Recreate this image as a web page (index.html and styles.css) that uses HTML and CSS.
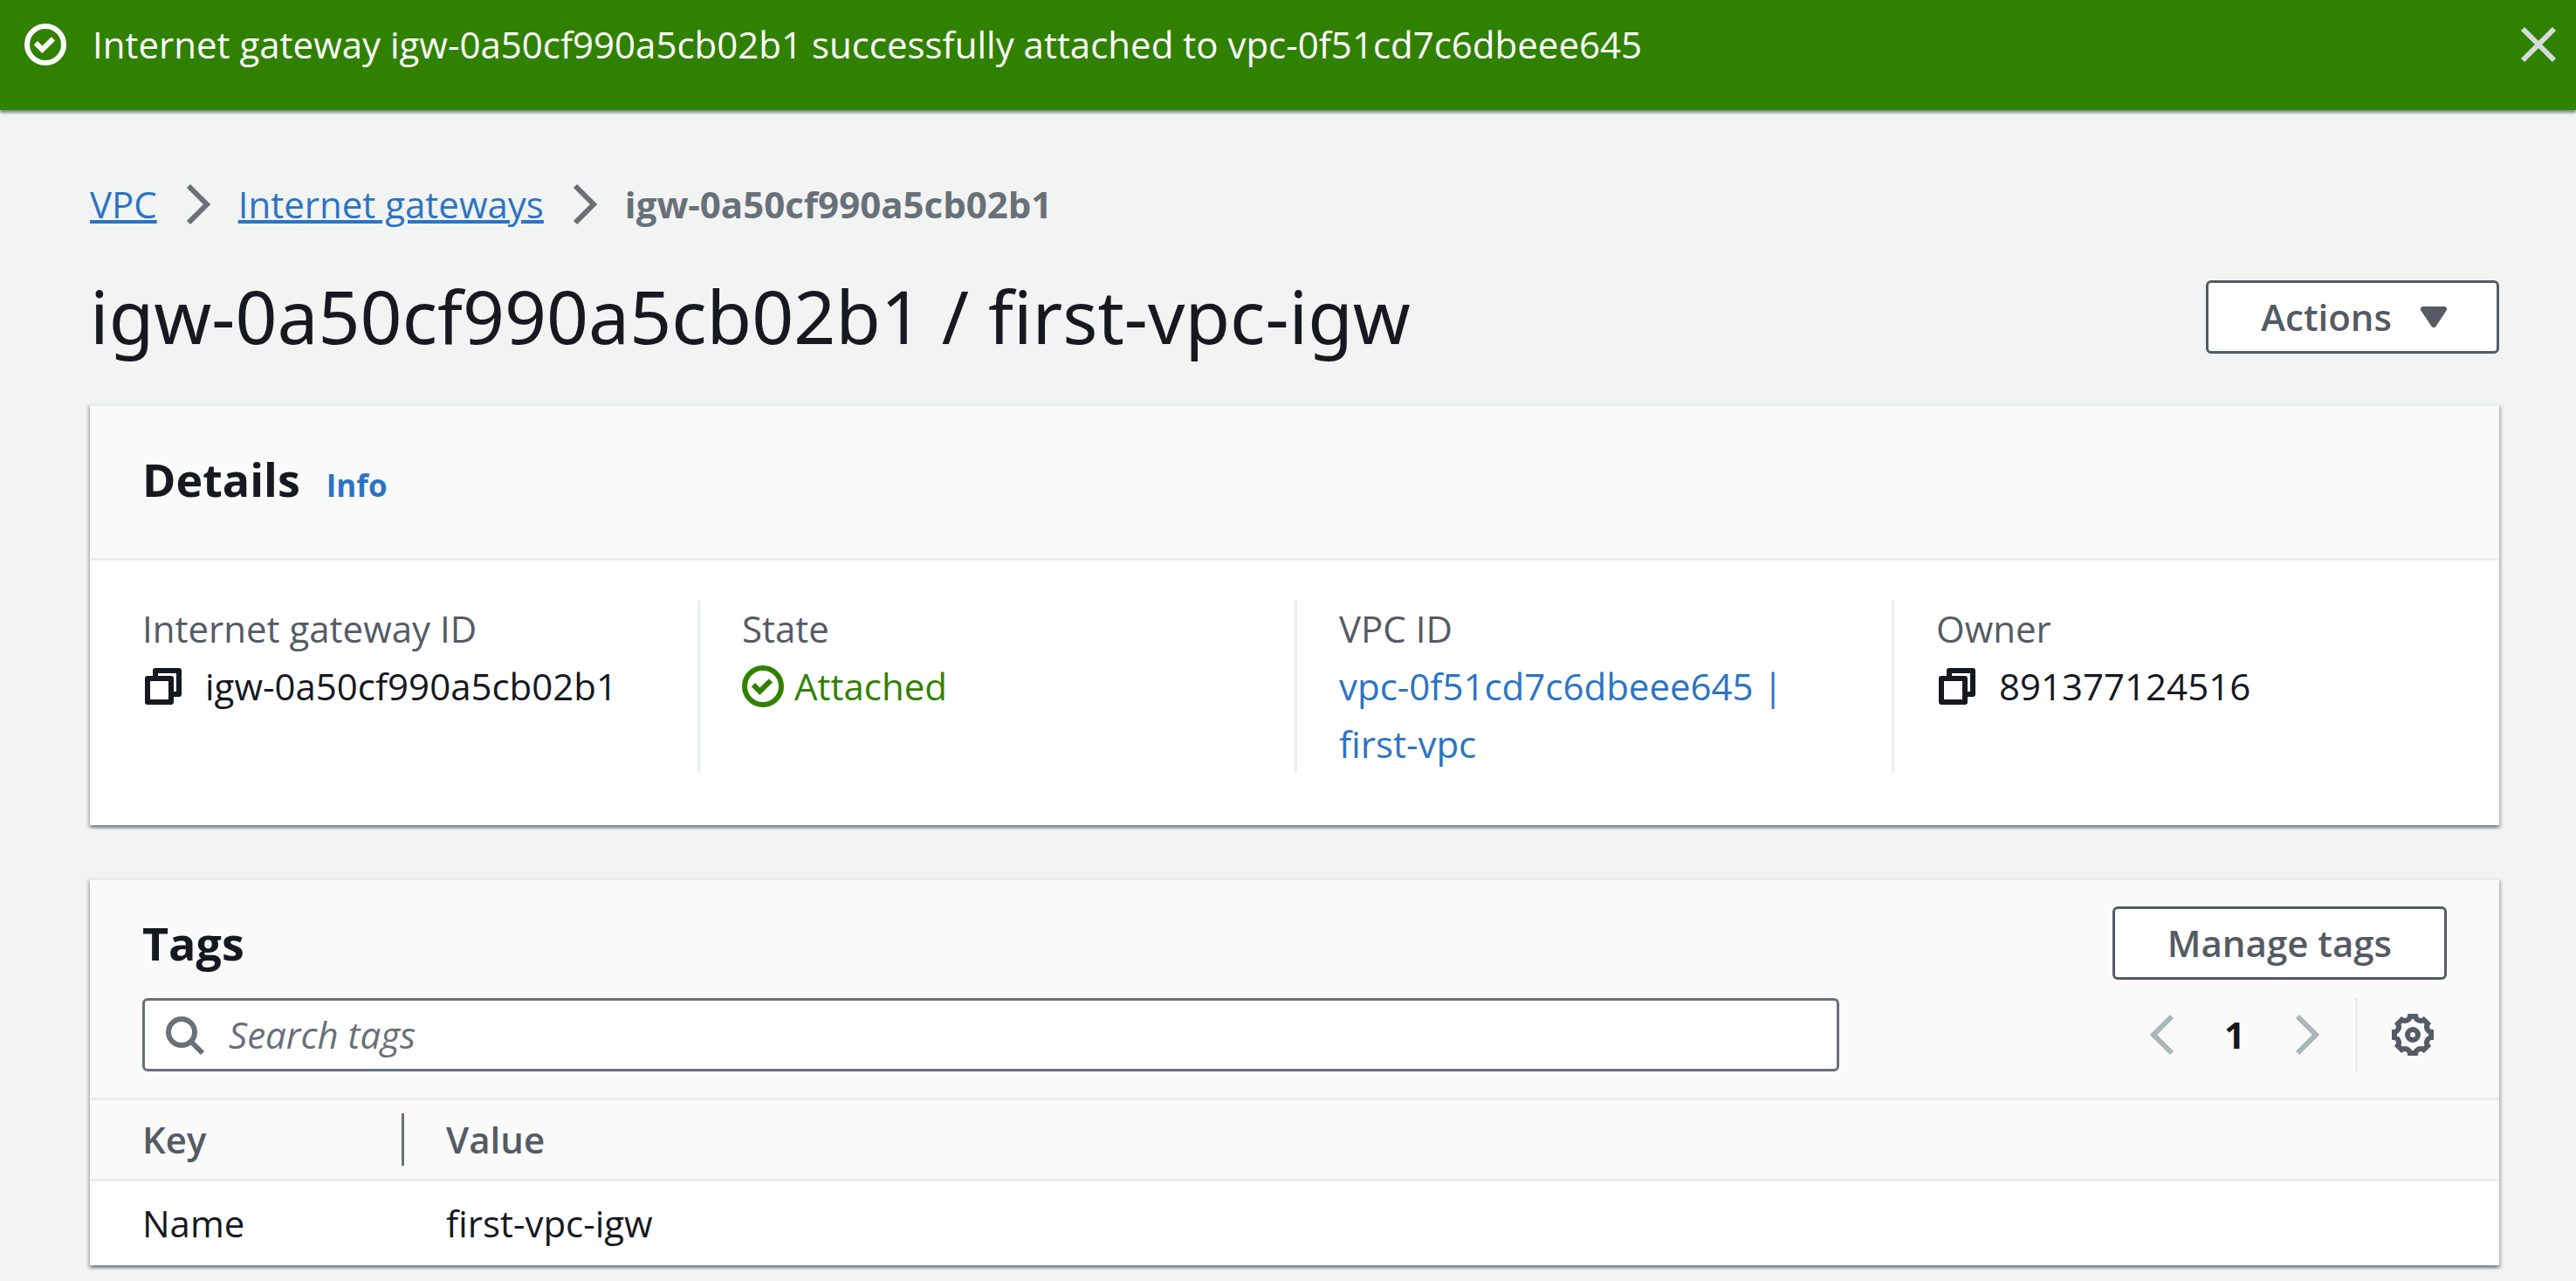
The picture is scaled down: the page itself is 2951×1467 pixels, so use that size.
FILE: index.html
```html
<!DOCTYPE html>
<html lang="en">
<head>
<meta charset="utf-8">
<meta name="viewport" content="width=device-width, initial-scale=1">
<title>igw-0a50cf990a5cb02b1 | VPC</title>
<link rel="stylesheet" href="styles.css">
</head>
<body>
<div class="flash" role="status">
  <svg class="icon" viewBox="0 0 16 16" aria-hidden="true"><circle cx="8" cy="8" r="7"/><path d="M4.3 7.4l2.5 2.5L11 5.8"/></svg>
  <p class="flash-text">Internet gateway igw-0a50cf990a5cb02b1 successfully attached to vpc-0f51cd7c6dbeee645</p>
  <button class="icon-button flash-close" type="button" aria-label="Dismiss">
    <svg class="icon" viewBox="0 0 16 16" aria-hidden="true"><path d="M2 2l12 12M14 2L2 14"/></svg>
  </button>
</div>

<main class="page">
  <nav aria-label="Breadcrumbs">
    <ol class="breadcrumbs">
      <li><a href="#vpc">VPC</a></li>
      <li><svg class="icon" viewBox="0 0 16 16" aria-hidden="true"><path d="M5 1l7 7-7 7"/></svg><a href="#internet-gateways">Internet gateways</a></li>
      <li><svg class="icon" viewBox="0 0 16 16" aria-hidden="true"><path d="M5 1l7 7-7 7"/></svg><span class="current" aria-current="page">igw-0a50cf990a5cb02b1</span></li>
    </ol>
  </nav>

  <header class="page-header">
    <h1>igw-0a50cf990a5cb02b1 / first-vpc-igw</h1>
    <div class="page-actions">
      <button class="button button-menu" type="button" aria-haspopup="true">Actions
        <svg class="icon icon-caret" viewBox="0 0 16 16" aria-hidden="true"><path d="M4 5h8l-4 6z"/></svg>
      </button>
    </div>
  </header>

  <section class="card" aria-labelledby="details-title">
    <header class="card-header">
      <h2 id="details-title">Details</h2>
      <a class="info" href="#info">Info</a>
    </header>
    <dl class="details">
      <div class="detail">
        <dt>Internet gateway ID</dt>
        <dd class="copyable">
          <button class="icon-button" type="button" aria-label="Copy internet gateway ID"><svg class="icon icon-copy" viewBox="0 0 16 16" aria-hidden="true"><path d="M5 5V2h9v9h-3"/><path d="M2 5h9v9H2z"/></svg></button>
          <span>igw-0a50cf990a5cb02b1</span>
        </dd>
      </div>
      <div class="detail">
        <dt>State</dt>
        <dd class="status">
          <svg class="icon" viewBox="0 0 16 16" aria-hidden="true"><circle cx="8" cy="8" r="7"/><path d="M4.3 7.4l2.5 2.5L11 5.8"/></svg>
          <span>Attached</span>
        </dd>
      </div>
      <div class="detail">
        <dt>VPC ID</dt>
        <dd><a href="#vpc-0f51cd7c6dbeee645">vpc-0f51cd7c6dbeee645 | first-vpc</a></dd>
      </div>
      <div class="detail">
        <dt>Owner</dt>
        <dd class="copyable">
          <button class="icon-button" type="button" aria-label="Copy owner"><svg class="icon icon-copy" viewBox="0 0 16 16" aria-hidden="true"><path d="M5 5V2h9v9h-3"/><path d="M2 5h9v9H2z"/></svg></button>
          <span>891377124516</span>
        </dd>
      </div>
    </dl>
  </section>

  <section class="card" aria-labelledby="tags-title">
    <header class="tags-header">
      <div class="tags-title">
        <h2 id="tags-title">Tags</h2>
        <button class="button" type="button">Manage tags</button>
      </div>
      <div class="tags-tools">
        <label class="search">
          <svg class="icon" viewBox="0 0 16 16" aria-hidden="true"><circle cx="7" cy="7" r="5"/><path d="M10.5 10.5L15 15"/></svg>
          <input type="search" placeholder="Search tags" aria-label="Search tags">
        </label>
        <div class="tools-end">
          <div class="pagination">
            <button class="icon-button" type="button" aria-label="Previous page" disabled><svg class="icon" viewBox="0 0 16 16" aria-hidden="true"><path d="M11 1L4 8l7 7"/></svg></button>
            <button class="page-number" type="button" aria-current="true">1</button>
            <button class="icon-button" type="button" aria-label="Next page" disabled><svg class="icon" viewBox="0 0 16 16" aria-hidden="true"><path d="M5 1l7 7-7 7"/></svg></button>
          </div>
          <div class="preferences">
            <button class="icon-button" type="button" aria-label="Preferences"><svg class="icon" viewBox="0 0 16 16" aria-hidden="true"><circle cx="8" cy="8" r="2"/><path d="M6.95 1H9.05A2 2 0 0 0 12.2 2.3L13.7 3.8A2 2 0 0 0 15 6.95V9.05A2 2 0 0 0 13.7 12.2L12.2 13.7A2 2 0 0 0 9.05 15H6.95A2 2 0 0 0 3.8 13.7L2.3 12.2A2 2 0 0 0 1 9.05V6.95A2 2 0 0 0 2.3 3.8L3.8 2.3A2 2 0 0 0 6.95 1Z"/></svg></button>
          </div>
        </div>
      </div>
    </header>
    <table class="tags">
      <thead>
        <tr><th class="key" scope="col"><span class="divided">Key</span></th><th scope="col">Value</th></tr>
      </thead>
      <tbody>
        <tr><td>Name</td><td>first-vpc-igw</td></tr>
      </tbody>
    </table>
  </section>
</main>
</body>
</html>
```
FILE: styles.css
```css
:root {
  --text: #16191f;
  --secondary: #545b64;
  --muted: #687078;
  --link: #2b74c4;
  --success: #318100;
  --line: #eaeded;
  --shadow: 0 3px 3px rgba(0, 28, 36, .3), 3px 3px 3px rgba(0, 28, 36, .15), -3px 3px 3px rgba(0, 28, 36, .15);
}

* { box-sizing: border-box; }

body {
  margin: 0;
  background: #f2f3f3;
  color: var(--text);
  font: 42px/66px "Open Sans", "Noto Sans", sans-serif;
}

h1, h2, p, ol, dl, dd { margin: 0; padding: 0; font-weight: 400; }
button, input { font: inherit; }
a { color: var(--link); text-decoration: none; }

.icon {
  display: block;
  flex: none;
  width: 48px;
  height: 48px;
  fill: none;
  stroke: currentColor;
  stroke-width: 2;
}
.icon-caret { fill: currentColor; stroke-linejoin: round; }
.icon-copy { stroke-linejoin: round; }

.icon-button {
  flex: none;
  padding: 0;
  border: 0;
  background: none;
  color: inherit;
}

.button {
  display: flex;
  align-items: center;
  height: 84px;
  padding: 0 60px;
  border: 3px solid var(--secondary);
  border-radius: 6px;
  background: #fff;
  color: var(--secondary);
  font-weight: 600;
}
.button-menu { gap: 24px; padding-right: 48px; }

.flash {
  display: flex;
  align-items: center;
  gap: 30px;
  padding: 18px 19px 42px 28px;
  background: var(--success);
  color: #fff;
  box-shadow: 0 3px 3px rgba(0, 28, 36, .5);
}
.flash-text { flex: 1; }
.flash-close { color: #d5dbdb; }

.page { padding: 75px 88px 18px 103px; }

.breadcrumbs { display: flex; list-style: none; }
.breadcrumbs li { display: flex; align-items: center; }
.breadcrumbs a { text-decoration: underline; text-decoration-thickness: 4px; }
.breadcrumbs .icon { margin: 0 24px 0 21px; color: var(--muted); }
.current { color: var(--muted); font-weight: 700; }

.page-header {
  display: flex;
  justify-content: space-between;
  align-items: flex-start;
  padding: 42px 0 48px;
}
h1 { font-family: "Noto Sans", "Open Sans", sans-serif; font-size: 84px; line-height: 105px; }
.page-actions { padding-top: 12px; }

.card {
  border-top: 3px solid var(--line);
  background: #fff;
  box-shadow: var(--shadow);
}
.card + .card { margin-top: 60px; }

h2 { font-size: 52px; line-height: 84px; font-weight: 700; }

.card-header {
  display: flex;
  align-items: baseline;
  gap: 30px;
  padding: 42px 60px 48px;
  border-bottom: 3px solid var(--line);
  background: #fafafa;
}
.info { font-size: 35px; line-height: 60px; font-weight: 700; }

.details {
  display: grid;
  grid-template-columns: repeat(4, 1fr);
  padding: 45px 12px 60px;
}
.detail { padding: 0 48px; }
.detail + .detail { border-left: 3px solid var(--line); }
dt { color: var(--secondary); }
.copyable, .status { display: flex; align-items: center; }
.copyable { gap: 24px; }
.status { gap: 12px; color: var(--success); }

.tags-header {
  padding: 30px 60px;
  border-bottom: 3px solid var(--line);
  background: #fafafa;
}
.tags-title { display: flex; justify-content: space-between; align-items: flex-end; margin-bottom: 21px; }
.tags-tools { display: grid; grid-template-columns: 67fr 24fr; }

.search {
  display: flex;
  align-items: center;
  gap: 27px;
  height: 84px;
  padding: 0 21px;
  border: 3px solid var(--muted);
  border-radius: 6px;
  background: #fff;
  color: var(--muted);
}
.search input {
  flex: 1;
  min-width: 0;
  padding: 0;
  border: 0;
  outline: 0;
  background: none;
  color: var(--text);
}
.search input::placeholder { color: var(--muted); font-style: italic; opacity: 1; }

.tools-end { display: flex; justify-content: flex-end; }
.pagination { display: flex; align-items: center; gap: 24px; padding-right: 33px; color: #aab7b8; }
.page-number {
  width: 66px;
  padding: 0;
  border: 0;
  background: none;
  color: var(--text);
  font-weight: 700;
}
.preferences {
  display: flex;
  align-items: center;
  padding: 0 15px 0 39px;
  border-left: 3px solid var(--line);
  color: var(--secondary);
}

.tags { width: 100%; border-collapse: separate; border-spacing: 0; text-align: left; }
.tags th, .tags td { padding: 15px 60px 15px 48px; }
.tags th:first-child, .tags td:first-child { padding: 15px 0 15px 60px; }
.tags th {
  border-bottom: 3px solid var(--line);
  background: #fafafa;
  color: var(--secondary);
  font-weight: 600;
  line-height: 60px;
}
.key { width: 360px; }
.divided { display: block; border-right: 3px solid var(--muted); }
```
